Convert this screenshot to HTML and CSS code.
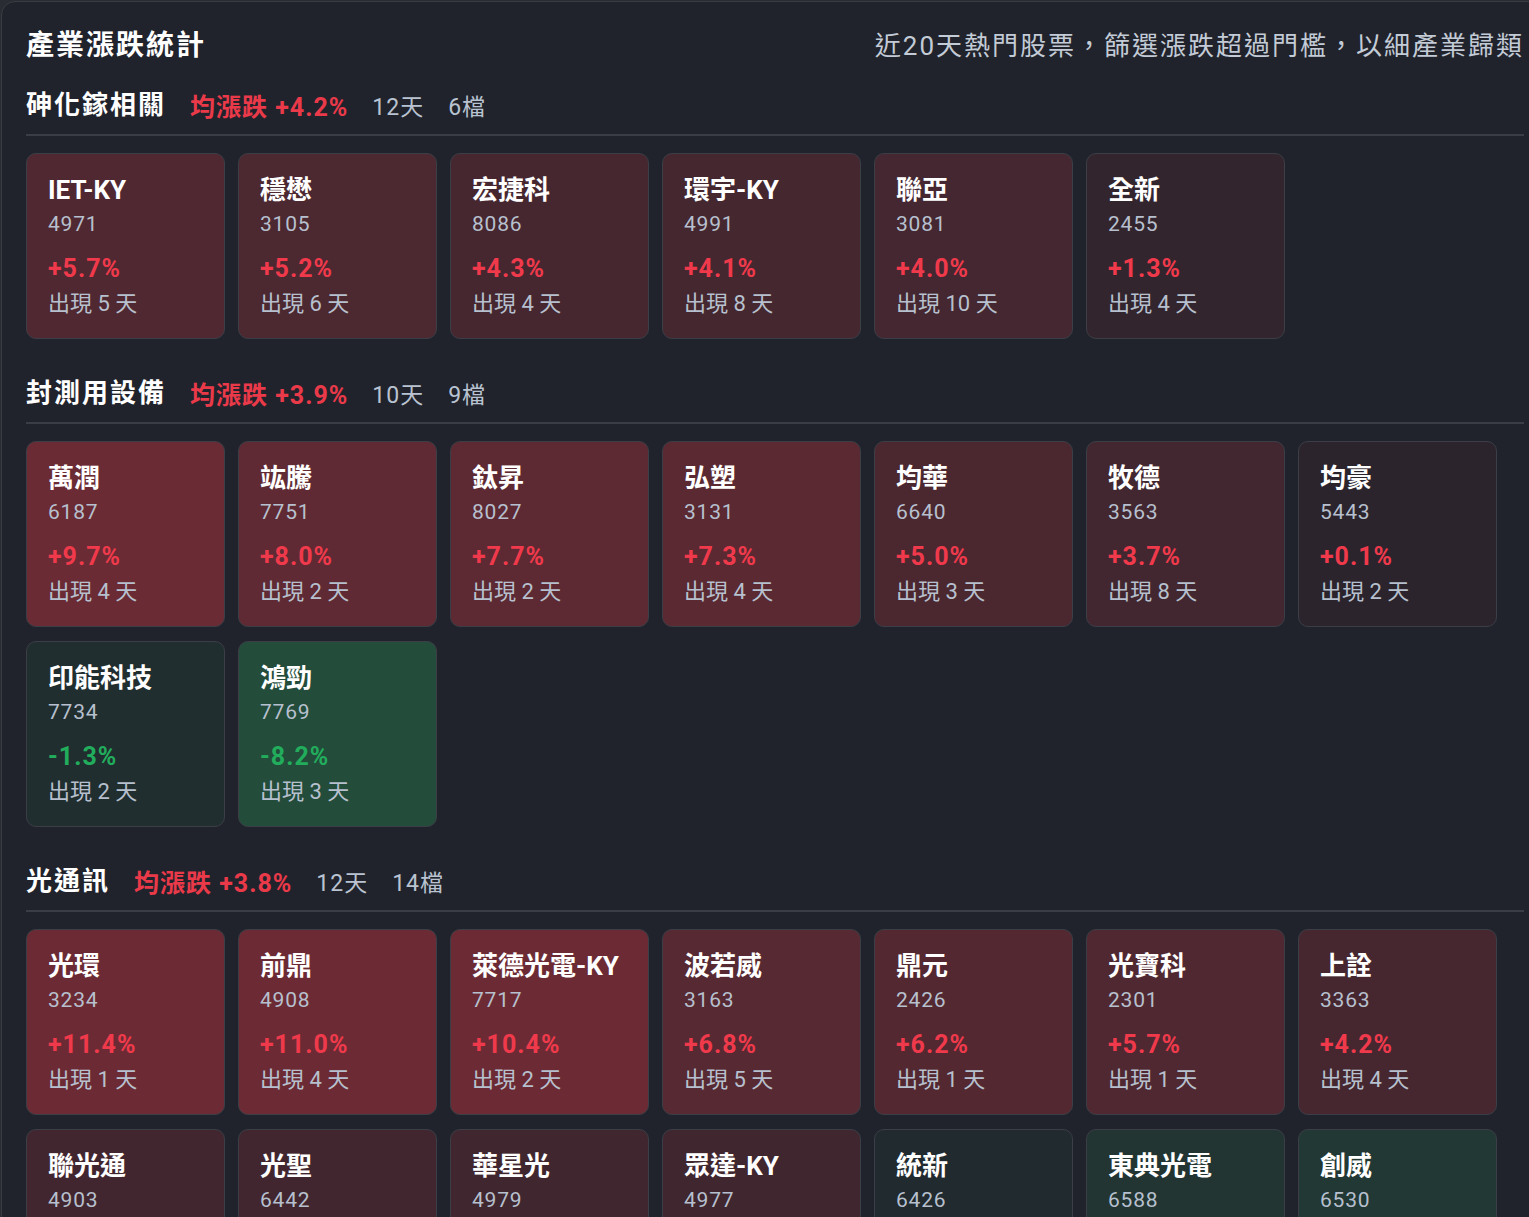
FILE: index.html
```html
<!DOCTYPE html>
<html lang="zh-Hant">
<head>
    <meta charset="UTF-8">
    <meta name="viewport" content="width=device-width, initial-scale=1.0">
    <title>產業漲跌統計</title>
    <link rel="stylesheet" href="styles.css">
</head>
<body>
    <div class="panel">
        <div class="panel-head">
            <h1>產業漲跌統計</h1>
            <span class="panel-note">近20天熱門股票，篩選漲跌超過門檻，以細產業歸類</span>
        </div>
        <div id="industry-list"></div>
    </div>

    <script>
        // Industry groups with their hot stocks
        const industries = [
            { name: '砷化鎵相關', avg: 4.2, days: 12, count: 6, stocks: [
                ['IET-KY', '4971', 5.7, 5], ['穩懋', '3105', 5.2, 6], ['宏捷科', '8086', 4.3, 4],
                ['環宇-KY', '4991', 4.1, 8], ['聯亞', '3081', 4.0, 10], ['全新', '2455', 1.3, 4]
            ]},
            { name: '封測用設備', avg: 3.9, days: 10, count: 9, stocks: [
                ['萬潤', '6187', 9.7, 4], ['竑騰', '7751', 8.0, 2], ['鈦昇', '8027', 7.7, 2],
                ['弘塑', '3131', 7.3, 4], ['均華', '6640', 5.0, 3], ['牧德', '3563', 3.7, 8],
                ['均豪', '5443', 0.1, 2], ['印能科技', '7734', -1.3, 2], ['鴻勁', '7769', -8.2, 3]
            ]},
            { name: '光通訊', avg: 3.8, days: 12, count: 14, stocks: [
                ['光環', '3234', 11.4, 1], ['前鼎', '4908', 11.0, 4], ['萊德光電-KY', '7717', 10.4, 2],
                ['波若威', '3163', 6.8, 5], ['鼎元', '2426', 6.2, 1], ['光寶科', '2301', 5.7, 1],
                ['上詮', '3363', 4.2, 4], ['聯光通', '4903', 3.6, 2], ['光聖', '6442', 3.5, 3],
                ['華星光', '4979', 3.4, 2], ['眾達-KY', '4977', 3.2, 1], ['統新', '6426', -0.2, 2],
                ['東典光電', '6588', -2.8, 3], ['創威', '6530', -3.5, 2]
            ]}
        ];

        // Mix the card colour toward red / green by the size of the move
        function cardColor(pct) {
            const base = [33, 35, 44];
            const end = pct >= 0 ? [108, 43, 52] : [35, 84, 62];
            const a = 0.12 + 0.88 * Math.min(Math.abs(pct) / 10, 1);
            const c = base.map((v, i) => Math.round(v + (end[i] - v) * a));
            return `rgb(${c.join(',')})`;
        }

        function fmt(pct) {
            return (pct >= 0 ? '+' : '') + pct.toFixed(1) + '%';
        }

        const list = document.getElementById('industry-list');
        industries.forEach(group => {
            const section = document.createElement('section');
            section.className = 'industry';
            const cards = group.stocks.map(([name, code, pct, days]) => `
                <div class="stock-card" style="background-color: ${cardColor(pct)}">
                    <div class="stock-name">${name}</div>
                    <div class="stock-code">${code}</div>
                    <div class="stock-pct ${pct >= 0 ? 'up' : 'down'}">${fmt(pct)}</div>
                    <div class="stock-days">出現 ${days} 天</div>
                </div>
            `).join('');
            section.innerHTML = `
                <div class="industry-head">
                    <h2>${group.name}</h2>
                    <span class="industry-avg">均漲跌 ${fmt(group.avg)}</span>
                    <span class="industry-meta">${group.days}天</span>
                    <span class="industry-meta">${group.count}檔</span>
                </div>
                <div class="card-grid">${cards}</div>
            `;
            list.appendChild(section);
        });
    </script>
</body>
</html>
```

FILE: styles.css
```css
html, body {
    overflow: hidden;
}
body {
    margin: 0;
    padding: 0;
    background-color: #2a2c33;
    font-family: Roboto, "Noto Sans CJK TC", sans-serif;
    color: #ffffff;
}
.panel {
    width: 1498px;
    margin: 1px 0 0 1px;
    padding: 26px 24px 40px;
    background-color: #21232c;
    border: 1px solid #3a3c44;
    border-radius: 14px;
}
.panel-head {
    display: flex;
    justify-content: space-between;
    align-items: center;
    height: 36px;
    margin-bottom: 23px;
}
.panel-head h1 {
    margin: 0;
    font-size: 28px;
    font-weight: 700;
    letter-spacing: 2px;
    line-height: 36px;
}
.panel-note {
    font-size: 26px;
    letter-spacing: 2px;
    color: #c3cbd6;
    line-height: 36px;
}
.industry {
    margin-bottom: 36px;
}
.industry-head {
    display: flex;
    align-items: center;
    gap: 24px;
    height: 36px;
    padding-bottom: 11px;
    border-bottom: 2px solid #3a3d45;
    margin-bottom: 17px;
}
.industry-head h2 {
    margin: 0;
    font-size: 26px;
    font-weight: 700;
    letter-spacing: 2px;
    line-height: 36px;
}
.industry-avg {
    font-size: 25px;
    font-weight: 700;
    letter-spacing: 1px;
    color: #ea3a4a;
}
.industry-meta {
    font-size: 23px;
    letter-spacing: 1px;
    color: #b9c3d1;
}
.card-grid {
    display: grid;
    grid-template-columns: repeat(7, 199px);
    gap: 14px 13px;
}
.stock-card {
    box-sizing: border-box;
    height: 186px;
    padding: 18px 21px 15px;
    border: 1px solid #3b3e46;
    border-radius: 10px;
}
.stock-name {
    font-size: 26px;
    font-weight: 700;
    line-height: 36px;
}
.stock-code {
    font-size: 21px;
    color: #b7c0ce;
    line-height: 32px;
    letter-spacing: 0.8px;
}
.stock-pct {
    margin-top: 13px;
    font-size: 25px;
    font-weight: 700;
    letter-spacing: 1px;
    line-height: 32px;
}
.stock-pct.up {
    color: #f03a4c;
}
.stock-pct.down {
    color: #22ad5c;
}
.stock-days {
    font-size: 22px;
    color: #b7c0ce;
    line-height: 38px;
}
```
